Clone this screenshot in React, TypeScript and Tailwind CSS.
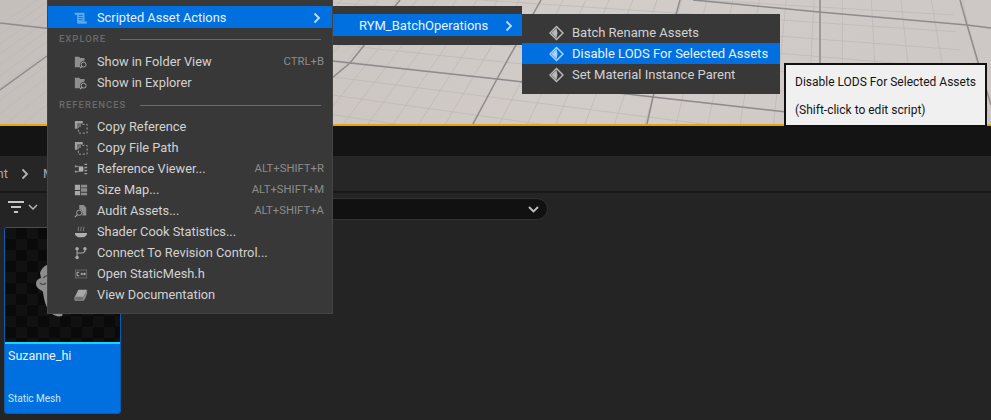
import { useMemo, type ReactNode } from "react";

const font = { fontFamily: "Roboto, 'Liberation Sans', sans-serif" };

// square-to-quad homography, keeps the floor tiles in perspective
function makeFloor() {
  const [x0, y0, x1, y1, x2, y2, x3, y3] = [497, 79, 653, 97, 682, -1, 546, -9];
  const dx1 = x1 - x2;
  const dx2 = x3 - x2;
  const dy1 = y1 - y2;
  const dy2 = y3 - y2;
  const sx = x0 - x1 + x2 - x3;
  const sy = y0 - y1 + y2 - y3;
  const d = dx1 * dy2 - dx2 * dy1;
  const g = (sx * dy2 - dx2 * sy) / d;
  const h = (dx1 * sy - sx * dy1) / d;
  const a = x1 - x0 + g * x1;
  const b = x3 - x0 + h * x3;
  const c = x0;
  const e = y1 - y0 + g * y1;
  const f = y3 - y0 + h * y3;
  return (u: number, v: number) => {
    const w = g * u + h * v + 1;
    return [(a * u + b * v + c) / w, (e * u + f * v + y0) / w];
  };
}

function Floor() {
  const minor = useMemo(() => {
    const p = makeFloor();
    const out: string[] = [];
    const seg = (u0: number, v0: number, u1: number, v1: number) => {
      const [ax, ay] = p(u0, v0);
      const [bx, by] = p(u1, v1);
      return `M${ax.toFixed(1)} ${ay.toFixed(1)}L${bx.toFixed(1)} ${by.toFixed(1)}`;
    };
    for (let i = -30; i <= 30; i++) {
      const t = i / 6;
      out.push(seg(t, -1.2, t, 1.3));
      out.push(seg(-3.2, t, 2.6, t));
    }
    return out.join("");
  }, []);
  return (
    <svg width="991" height="124" className="block">
      <defs>
        <linearGradient id="floor" x1="0" x2="1" y1="0" y2="0">
          <stop offset="0" stopColor="#c4bfbb" />
          <stop offset="0.6" stopColor="#d2cdc9" />
          <stop offset="1" stopColor="#cdc8c5" />
        </linearGradient>
      </defs>
      <rect width="991" height="124" fill="url(#floor)" />
      <path d={minor} stroke="#bdb8b5" strokeWidth="0.7" fill="none" />
      <path
        d="M0 23L350 63L497 79L653 97L895 124M0 90L47 56L130 0M320 88L350 63L400 0M473 124L497 79L541 0M647 124L653 97L680 0M820 0V64M960 0L967 25L991 105M693 0L819 12L967 25L991 28"
        stroke="#8e8b8d"
        strokeWidth="1.500"
        fill="none"
      />
    </svg>
  );
}

function Ico({ children }: { children: ReactNode }) {
  return (
    <svg width="14" height="14" viewBox="0 0 16 16" fill="#8e8e8e" stroke="none" className="shrink-0">
      {children}
    </svg>
  );
}

const FolderSearch = () => (
  <Ico>
    <path d="M1 2h5l1 1.500h5v3a5 5 0 0 0-4.600 7.500H1z" />
    <circle cx="11" cy="11" r="2.800" fill="none" stroke="#b0b0b0" strokeWidth="1" />
    <path d="M9 13l-2 2" stroke="#b0b0b0" strokeWidth="1.200" />
  </Ico>
);
const CopyIco = () => (
  <Ico>
    <path d="M1 1h9v3H4v6H1z" fill="#a0a0a0" />
    <rect x="5" y="5" width="10" height="10" fill="none" stroke="#a8a8a8" strokeWidth="1" strokeDasharray="2.500 2" />
    <rect x="4" y="4" width="4" height="4" fill="#707070" />
  </Ico>
);
const RefViewer = () => (
  <Ico>
    <rect x="5.500" y="5" width="5" height="6" fill="#b0b0b0" />
    <path d="M1 4h2v2H1zM1 10h2v2H1zM12 2h3v1.500h-3zM12 5.500h3V7h-3zM12 9h3v1.500h-3zM12 12.500h3V14h-3z" fill="#a0a0a0" />
    <path d="M3 5h2.500M3 11h2.500M10.500 8H12" stroke="#a0a0a0" />
  </Ico>
);
const SizeMap = () => (
  <Ico>
    <path d="M1 2h6v6H1zM1 9h6v5H1z" fill="#a8a8a8" />
    <path d="M8 2h7v3H8zM8 6h7v4H8zM8 11h7v3H8z" fill="#8a8a8a" />
  </Ico>
);
const Audit = () => (
  <Ico>
    <path d="M6 1h5l3 3v9H9.500A5 5 0 0 0 6 6z" fill="#8e8e8e" />
    <circle cx="6" cy="10" r="3" fill="#383838" stroke="#a8a8a8" strokeWidth="1" />
    <path d="M3.800 12.200L1 15" stroke="#a8a8a8" strokeWidth="1.200" />
  </Ico>
);
const Shader = () => (
  <Ico>
    <path d="M1 9h14a7 6 0 0 1-4 5H5a7 6 0 0 1-4-5z" fill="#b0b0b0" />
    <path d="M5 7c-1-2 1-3 0-5M8 7c-1-2 1-3 0-5M11 7c-1-2 1-3 0-5" fill="none" stroke="#8a8a8a" strokeWidth="1" />
  </Ico>
);
const Branch = () => (
  <Ico>
    <circle cx="3.500" cy="3" r="2" fill="#a8a8a8" />
    <circle cx="3.500" cy="13" r="2" fill="#a8a8a8" />
    <circle cx="12.500" cy="3" r="2" fill="#a8a8a8" />
    <path d="M3.500 3v10M12.500 3v2a3 3 0 0 1-3 3h-6" fill="none" stroke="#a8a8a8" strokeWidth="1.200" />
  </Ico>
);
const Cpp = () => (
  <Ico>
    <rect x="1" y="3" width="14" height="10" fill="#6a6a6a" />
    <rect x="2" y="4" width="12" height="8" fill="#3a3a3a" />
    <path d="M6 6H3.500v4H6M7.500 8h3M9 6.500v3M10.500 8h3M12 6.500v3" fill="none" stroke="#c0c0c0" strokeWidth="1" />
  </Ico>
);
const Book = () => (
  <Ico>
    <path d="M5 2h10l-4 8H1z" fill="#a8a8a8" />
    <path d="M1 10h10v4H1z" fill="#6c6c6c" stroke="#a8a8a8" strokeWidth="0.800" />
    <path d="M11 10l4-8v4l-3 8z" fill="#8a8a8a" />
  </Ico>
);
const Scroll = () => (
  <Ico>
    <path d="M1 2h11v10h2.500a1.500 1.500 0 0 1-1.500 2.500H5A1.500 1.500 0 0 1 3.500 13V4.500H2A1.500 1.500 0 0 1 1 2z" fill="#5aa8ee" />
    <path d="M5.500 5h4.500M5.500 7.500h4.500M5.500 10h4.500" stroke="#0a6cd0" strokeWidth="1" />
  </Ico>
);
const Diamond = ({ active }: { active?: boolean }) => {
  const c = active ? "#a9d2f8" : "#b8b8b8";
  return (
    <svg width="15" height="16" viewBox="0 0 15 16" className="shrink-0">
      <path d="M7.500 1.500L14 8l-6.500 6.500L1 8z" fill="none" stroke={c} strokeWidth="1.500" />
      <path d="M7.500 3L2.500 8l5 5 1-5z" fill={c} />
    </svg>
  );
};
const Chev = ({ className = "" }: { className?: string }) => (
  <svg width="8" height="12" viewBox="0 0 8 12" className={className}>
    <path d="M1.500 1.500L6 6l-4.500 4.500" fill="none" stroke="currentColor" strokeWidth="1.800" />
  </svg>
);

function Header({ label, h }: { label: string; h: string }) {
  return (
    <div className={`flex items-center pl-[11px] pr-[11px] ${h}`}>
      <span className="text-[9.5px] tracking-[1px] font-medium text-[#6a6a6a]">{label}</span>
      <span className="ml-[14px] h-px flex-1 bg-[#6a6a6a]" />
    </div>
  );
}

function Row({ icon, label, keys }: { icon: ReactNode; label: string; keys?: string }) {
  return (
    <div className="flex h-[21px] items-center pl-[26px] pr-[8px]">
      {icon}
      <span className="ml-[9px] text-[12.8px] text-[#d2d2d2]">{label}</span>
      {keys && <span className="ml-auto pt-[1px] text-[11.3px] text-[#8c8c8c]">{keys}</span>}
    </div>
  );
}

function Menu() {
  return (
    <div className="absolute top-0 left-[47px] w-[286px] h-[314px] bg-[#383838] border-x border-b border-[#454545] pt-[6px]">
      <div className="flex h-[22px] items-center bg-[#0070e0] pl-[26px] pr-[9px] pt-[1px] text-[#e8f2fc]">
        <Scroll />
        <span className="ml-[9px] text-[12.8px]">Scripted Asset Actions</span>
        <Chev className="ml-auto mr-[2px] text-[#c4dcf5]" />
      </div>
      <Header label="EXPLORE" h="h-[23px]" />
      <Row icon={<FolderSearch />} label="Show in Folder View" keys="CTRL+B" />
      <Row icon={<FolderSearch />} label="Show in Explorer" />
      <Header label="REFERENCES" h="h-[23px] pt-[1px]" />
      <Row icon={<CopyIco />} label="Copy Reference" />
      <Row icon={<CopyIco />} label="Copy File Path" />
      <Row icon={<RefViewer />} label="Reference Viewer..." keys="ALT+SHIFT+R" />
      <Row icon={<SizeMap />} label="Size Map..." keys="ALT+SHIFT+M" />
      <Row icon={<Audit />} label="Audit Assets..." keys="ALT+SHIFT+A" />
      <Row icon={<Shader />} label="Shader Cook Statistics..." />
      <Row icon={<Branch />} label="Connect To Revision Control..." />
      <Row icon={<Cpp />} label="Open StaticMesh.h" />
      <Row icon={<Book />} label="View Documentation" />
    </div>
  );
}

function ScriptRow({ label, active }: { label: string; active?: boolean }) {
  return (
    <div className={`flex h-[21px] items-center pl-[27px] ${active ? "bg-[#0070e0] text-[#e8f2fc]" : "text-[#d2d2d2]"}`}>
      <Diamond active={active} />
      <span className="ml-[8px] text-[13px]">{label}</span>
    </div>
  );
}

function Submenus() {
  return (
    <>
      <div className="absolute top-[6px] left-[333px] w-[189px] h-[39px] bg-[#383838] pt-[8px]">
        <div className="flex h-[22px] items-center bg-[#0070e0] pl-[26px] pr-[9px] pt-[1px] text-[#e8f2fc]">
          <span className="text-[13px]">RYM_BatchOperations</span>
          <Chev className="ml-auto text-[#c4dcf5]" />
        </div>
      </div>
      <div className="absolute top-[14px] left-[522px] w-[258px] h-[80px] bg-[#383838] pt-[8px]">
        <ScriptRow label="Batch Rename Assets" />
        <ScriptRow label="Disable LODS For Selected Assets" active />
        <ScriptRow label="Set Material Instance Parent" />
      </div>
      <div className="absolute top-[63px] left-[784px] w-[203px] h-[64px] bg-[#f0f0f0] border-2 border-[#111111] pl-[9px] text-[12px] text-[#141414]">
        <div className="mt-[8px] h-[18px] leading-[18px]">Disable LODS For Selected Assets</div>
        <div className="mt-[10px] h-[18px] leading-[18px]">(Shift-click to edit script)</div>
      </div>
    </>
  );
}

function AssetCard() {
  return (
    <div className="absolute top-[227px] left-[4px] w-[117px] h-[187px] rounded-[3px] bg-[#0070e0] border border-[#0a5cb0] overflow-hidden">
      <div className="h-[114px] bg-[#0b0b0b] bg-[repeating-conic-gradient(#0a0a0a_0_25%,#111111_0_50%)] bg-[length:22px_22px]">
        <svg width="115" height="114">
          <path d="M42 37c-3 1-6 4-7 8l1 5c-5 1-6 6-4 9 2 3 5 3 6 5 1 8 3 16 8 21 3 3 8 4 11 3l2-6-12-4 8-40z" fill="#8d8d8d" />
          <path d="M38 50c2-2 5-3 7-2M35 55c2 2 4 2 6 0" stroke="#4f4f4f" strokeWidth="1.500" fill="none" />
        </svg>
      </div>
      <div className="h-[2px] bg-[#12d8ff]" />
      <div className="pl-[3px] pt-[3px] text-[12.5px] leading-[18px] text-[#eaf4ff]">Suzanne_hi</div>
      <div className="pl-[3px] mt-[27px] text-[10px] leading-[14px] text-[#cfe4fa]">Static Mesh</div>
    </div>
  );
}

export default function App() {
  return (
    <div className="relative w-[991px] h-[420px] overflow-hidden bg-[#242424] flex flex-col" style={font}>
      <Floor />
      <div className="h-[2px] bg-[#e8a30e]" />
      <div className="h-[30px] bg-[#141414]" />
      <div className="h-[35px] bg-[#262626] flex items-center text-[13px] text-[#a8a8a8]">
        <span className="w-[8px] overflow-hidden flex justify-end">nt</span>
        <Chev className="ml-[13px] text-[#b4b4b4]" />
        <span className="ml-[14px]">M</span>
      </div>
      <div className="h-[2px] bg-[#191919]" />
      <div className="relative h-[27px] flex items-center pl-[8px]">
        <svg width="16" height="12" viewBox="0 0 16 12">
          <path d="M0 1h16M3 6h10M6 11h4" stroke="#c8c8c8" strokeWidth="2" />
        </svg>
        <svg width="10" height="6" viewBox="0 0 10 6" className="ml-[4px]">
          <path d="M1 1l4 4 4-4" fill="none" stroke="#b4b4b4" strokeWidth="1.500" />
        </svg>
        <div className="absolute left-[50px] top-[5px] w-[498px] h-[22px] rounded-full bg-[#111111] border border-[#323232] flex items-center justify-end pr-[8px]">
          <svg width="11" height="7" viewBox="0 0 11 7">
            <path d="M1 1l4.500 4.500L10 1" fill="none" stroke="#c0c0c0" strokeWidth="1.800" />
          </svg>
        </div>
      </div>
      <AssetCard />
      <Menu />
      <Submenus />
    </div>
  );
}
